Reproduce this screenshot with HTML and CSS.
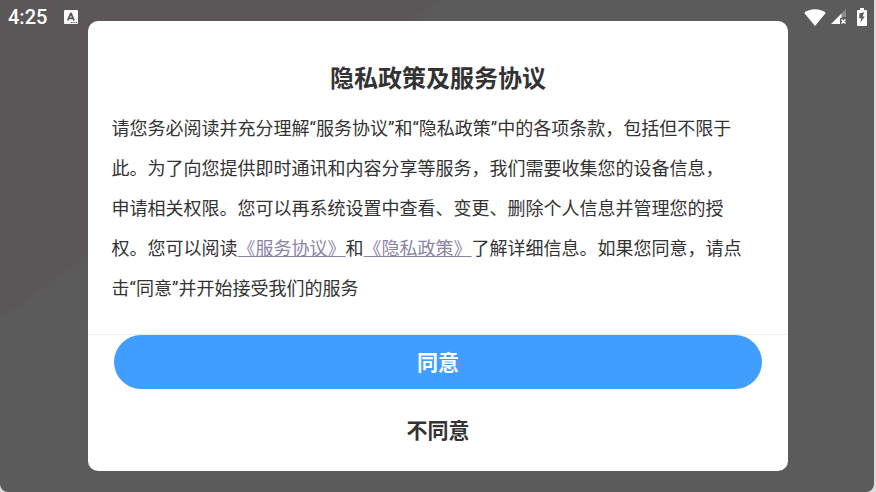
FILE: index.html
```
<!DOCTYPE html>
<html lang="zh-CN">
<head>
    <meta charset="UTF-8">
    <meta name="viewport" content="width=device-width, initial-scale=1">
    <title>隐私政策及服务协议</title>
    <link rel="stylesheet" href="styles.css">
</head>
<body>
    <div class="stage">
        <div class="backdrop"></div>
        <header class="status-bar">
            <time class="clock">4:25</time>
            <svg class="icon-input" width="14" height="14" viewBox="0 0 14 14">
                <rect width="14" height="14" rx="1" fill="#fff"/>
                <path d="M3.8 10.5 6.6 3.6h.6L10 10.500M5 8.300h4" fill="none" stroke="#5b5758" stroke-width="1.8"/>
                <path d="M7 12.500h1.400M9.300 12.500h1.400M11.600 12.500h1.400" stroke="#5b5758" stroke-width="1.200"/>
            </svg>
            <div class="status-icons">
                <svg width="22" height="17" viewBox="0 0 22 17">
                    <path d="M11 17 .3 3.9C3 1.5 6.700.2 11 .2s8 1.300 10.700 3.700z" fill="#fff"/>
                </svg>
                <svg width="16" height="16" viewBox="0 0 16 16">
                    <path d="M15 0v8H9.500V5.500z" fill="#8d8d8d"/>
                    <path d="M0 15 10.500 4.500V9H9v6z" fill="#fff"/>
                    <path d="M10.500 10.500l4 4M14.500 10.500l-4 4" stroke="#fff" stroke-width="1.600"/>
                </svg>
                <svg width="10" height="18" viewBox="0 0 10 18">
                    <path d="M3 0h4v2h2q1 0 1 1v14q0 1-1 1H1q-1 0-1-1V3q0-1 1-1h2z" fill="#fff"/>
                    <path d="M7.200 4.300 2.300 5.500V10.200h2.200L3.200 15 7.700 8.500H5.500z" fill="#5b5b5b"/>
                </svg>
            </div>
        </header>
        <main class="dialog" role="dialog" aria-labelledby="dialogTitle">
            <div class="dialog-body">
                <h1 id="dialogTitle">隐私政策及服务协议</h1>
                <p>
                    请您务必阅读并充分理解“服务协议”和“隐私政策”中的各项条款，包括但不限于<br>此。为了向您提供即时通讯和内容分享等服务，我们需要收集您的设备信息，<br>申请相关权限。您可以再系统设置中查看、变更、删除个人信息并管理您的授<br>权。您可以阅读<a href="#service">《服务协议》</a>和<a href="#privacy">《隐私政策》</a>了解详细信息。如果您同意，请点<br>击“同意”并开始接受我们的服务
                </p>
            </div>
            <div class="dialog-actions">
                <button type="button" class="agree">同意</button>
                <button type="button" class="disagree">不同意</button>
            </div>
        </main>
    </div>
</body>
</html>
```
FILE: styles.css
```
* {
    box-sizing: border-box;
}
body {
    margin: 0;
    font-family: Roboto, "Noto Sans CJK SC", sans-serif;
    color: #333;
    background-color: #dcdcdc;
}
/* backdrop, status bar and dialog share one grid cell */
.stage {
    display: grid;
    min-height: 100vh;
}
.stage > * {
    grid-area: 1 / 1;
}
.backdrop {
    margin-right: 2px;
    border-radius: 0 0 8px 8px;
    background: linear-gradient(144deg, #5b5758 28%, #5b5b5b 29%);
}
.status-bar {
    display: flex;
    align-items: center;
    align-self: start;
    height: 34px;
    padding: 0 9px 0 8px;
    color: #fff;
}
.clock {
    font-size: 20px;
    font-weight: 500;
    line-height: 34px;
}
.icon-input {
    margin-left: 17px;
}
.status-icons {
    display: flex;
    align-items: center;
    gap: 5px;
    margin-left: auto;
}
.status-icons svg:last-child {
    margin-left: 5px;
}
.dialog {
    place-self: center;
    width: 80%;
    max-width: 900px;
    background-color: #fff;
    border-radius: 10px;
}
.dialog-body {
    padding: 40px 24px 25px;
    border-bottom: 1px solid #eee;
}
h1 {
    margin: 0 0 12px;
    font-size: 24px;
    font-weight: bold;
    line-height: 36px;
    text-align: center;
}
p {
    margin: 0;
    font-size: 18px;
    line-height: 40px;
}
a {
    color: #8a84a8;
    text-decoration: underline;
}
.dialog-actions {
    display: flex;
    flex-direction: column;
    padding: 0 26px 14px;
}
button {
    height: 54px;
    padding: 0 0 2px;
    border: none;
    border-radius: 27px;
    font-family: inherit;
    font-size: 21px;
    font-weight: bold;
    cursor: pointer;
}
.agree {
    background-color: #409eff;
    color: #fff;
}
.disagree {
    margin-top: 14px;
    background-color: transparent;
    color: #333;
}
```
